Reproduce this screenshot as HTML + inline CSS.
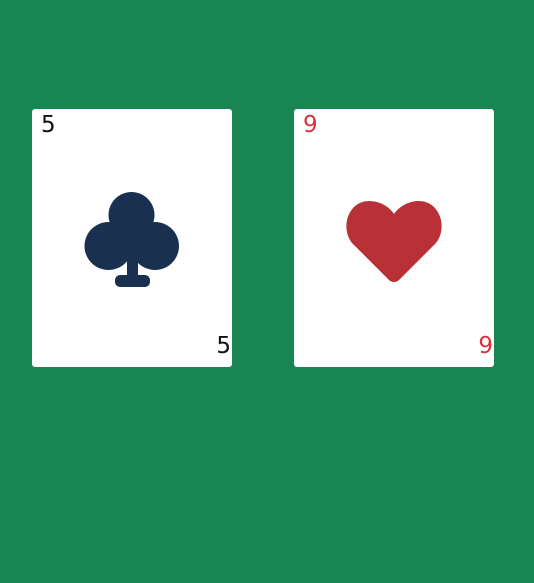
<!DOCTYPE html>
<html><head><style>
body{margin:0;width:534px;height:583px;background:#198553;position:relative;overflow:hidden;font-family:"DejaVu Sans","Liberation Sans",sans-serif}
.card{position:absolute;top:109px;width:200px;height:258px;background:#fff;border-radius:3px}
.n{position:absolute;font-size:23px;line-height:23px}
.tl{left:9px;top:5px}.br{right:1px;bottom:9px}
</style></head><body>
<div class="card" style="left:32px">
<div class="n tl" style="color:#111">5</div>
<div class="n br" style="color:#111">5</div>
<svg width="200" height="258" style="position:absolute;left:0;top:0">
<g fill="#1a3050">
<circle cx="99.5" cy="106" r="23"/>
<circle cx="76.5" cy="137" r="24"/>
<circle cx="123" cy="137" r="24"/>
<rect x="87" y="115" width="26" height="30"/>
<rect x="95" y="145" width="11" height="24"/>
<rect x="83" y="166" width="35" height="12" rx="5"/>
</g></svg>
</div>
<div class="card" style="left:294px">
<div class="n tl" style="color:#d8333a">9</div>
<div class="n br" style="color:#d8333a">9</div>
<svg width="200" height="258" style="position:absolute;left:0;top:0">
<path fill="#b93137" d="M100 105 C92 93 73 87 61 97 C49 108 50 128 61 137 L94 170 C97 174 103 174 106 170 L139 137 C150 128 151 108 139 97 C127 87 108 93 100 105Z"/>
</svg>
</div>
</body></html>
